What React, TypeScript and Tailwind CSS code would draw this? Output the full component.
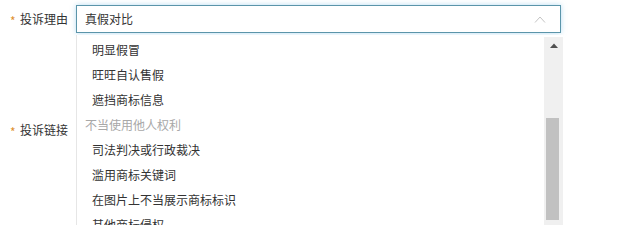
import React from "react";

const items: { text: string; group?: boolean }[] = [
  { text: "明显假冒" },
  { text: "旺旺自认售假" },
  { text: "遮挡商标信息" },
  { text: "不当使用他人权利", group: true },
  { text: "司法判决或行政裁决" },
  { text: "滥用商标关键词" },
  { text: "在图片上不当展示商标标识" },
  { text: "其他商标侵权" },
];

export default function App() {
  return (
    <div
      className="relative w-[638px] h-[225px] overflow-hidden bg-white text-[12px] text-[#333]"
      style={{ fontFamily: '"Noto Sans CJK SC", "Noto Sans", sans-serif' }}
    >
      <div className="flex flex-col pt-[5px]">
        <div className="flex items-center h-[28px]">
          <div className="flex items-center w-[76px] pl-[10px]">
            <span className="w-[10px] text-[#e0902f] text-[12px] leading-none pt-[3px]">*</span>
            <span className="leading-none">投诉理由</span>
          </div>
          <div className="flex items-center justify-between w-[485px] h-[28px] border border-[#5b95aa] bg-white pl-[8px] pr-[14px] shadow-[0_0_5px_rgba(120,190,230,0.55)]">
            <span className="leading-none">真假对比</span>
            <svg width="12" height="7" viewBox="0 0 12 7" fill="none">
              <polyline points="1,6.5 6,1 11,6.5" stroke="#c4c4c4" strokeWidth="1" />
            </svg>
          </div>
        </div>
        <div className="flex items-center h-[28px] mt-[83px]">
          <div className="flex items-center w-[76px] pl-[10px]">
            <span className="w-[10px] text-[#e0902f] text-[12px] leading-none pt-[3px]">*</span>
            <span className="leading-none">投诉链接</span>
          </div>
        </div>
      </div>

      <div className="absolute left-[76px] top-[35px] flex h-[200px] w-[487px] border-l border-[#e6e6e6] bg-white">
        <div className="flex-1 pt-[2px]">
          {items.map((it) =>
            it.group ? (
              <div key={it.text} className="h-[25px] leading-[25px] pl-[8px] text-[#a8a8a8]">
                {it.text}
              </div>
            ) : (
              <div key={it.text} className="h-[25px] leading-[25px] pl-[15px] text-[#333]">
                {it.text}
              </div>
            )
          )}
        </div>
        <div className="w-[19px] bg-[#f0f0f0] flex flex-col mt-[2px]">
          <div className="h-[17px] flex items-center justify-center">
            <svg width="8" height="5" viewBox="0 0 8 5">
              <polygon points="0,5 4,0.5 8,5" fill="#505050" />
            </svg>
          </div>
          <div className="ml-[2px] w-[13px] h-[102px] mt-[64px] bg-[#c1c1c1]" />
        </div>
      </div>
    </div>
  );
}
